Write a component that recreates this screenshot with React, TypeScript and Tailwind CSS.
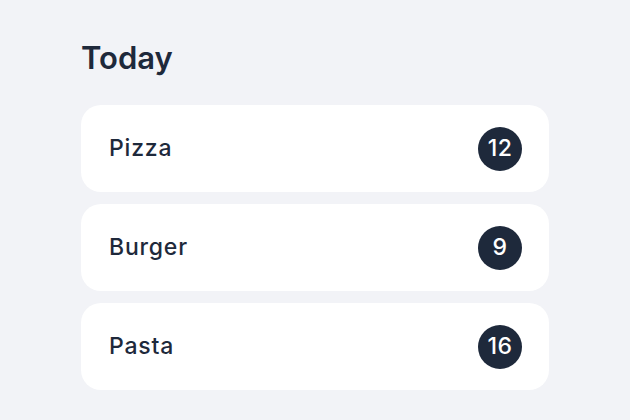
import React from "react";

const items = [
  { name: "Pizza", count: 12 },
  { name: "Burger", count: 9 },
  { name: "Pasta", count: 16 },
];

export default function App() {
  return (
    <div
      className="min-h-[420px] w-full bg-[#f2f3f7] pt-[40px]"
      style={{ fontFamily: "Inter, 'Noto Sans', sans-serif" }}
    >
      <div className="mx-auto w-[468px]">
        <h1 className="text-[31px] font-semibold leading-[36px] text-[#1e293b]">Today</h1>
        <div className="mt-[29px] flex flex-col gap-[12px]">
          {items.map((it) => (
            <div
              key={it.name}
              className="flex h-[87px] items-center justify-between rounded-[20px] bg-white pl-[28px] pr-[27px]"
            >
              <span className="text-[23px] font-medium tracking-[0.8px] text-[#1e293b]">{it.name}</span>
              <span className="flex h-[44px] w-[44px] items-center justify-center rounded-full bg-[#1e293b] text-[23px] font-medium tracking-[0.5px] text-white">
                {it.count}
              </span>
            </div>
          ))}
        </div>
      </div>
    </div>
  );
}
